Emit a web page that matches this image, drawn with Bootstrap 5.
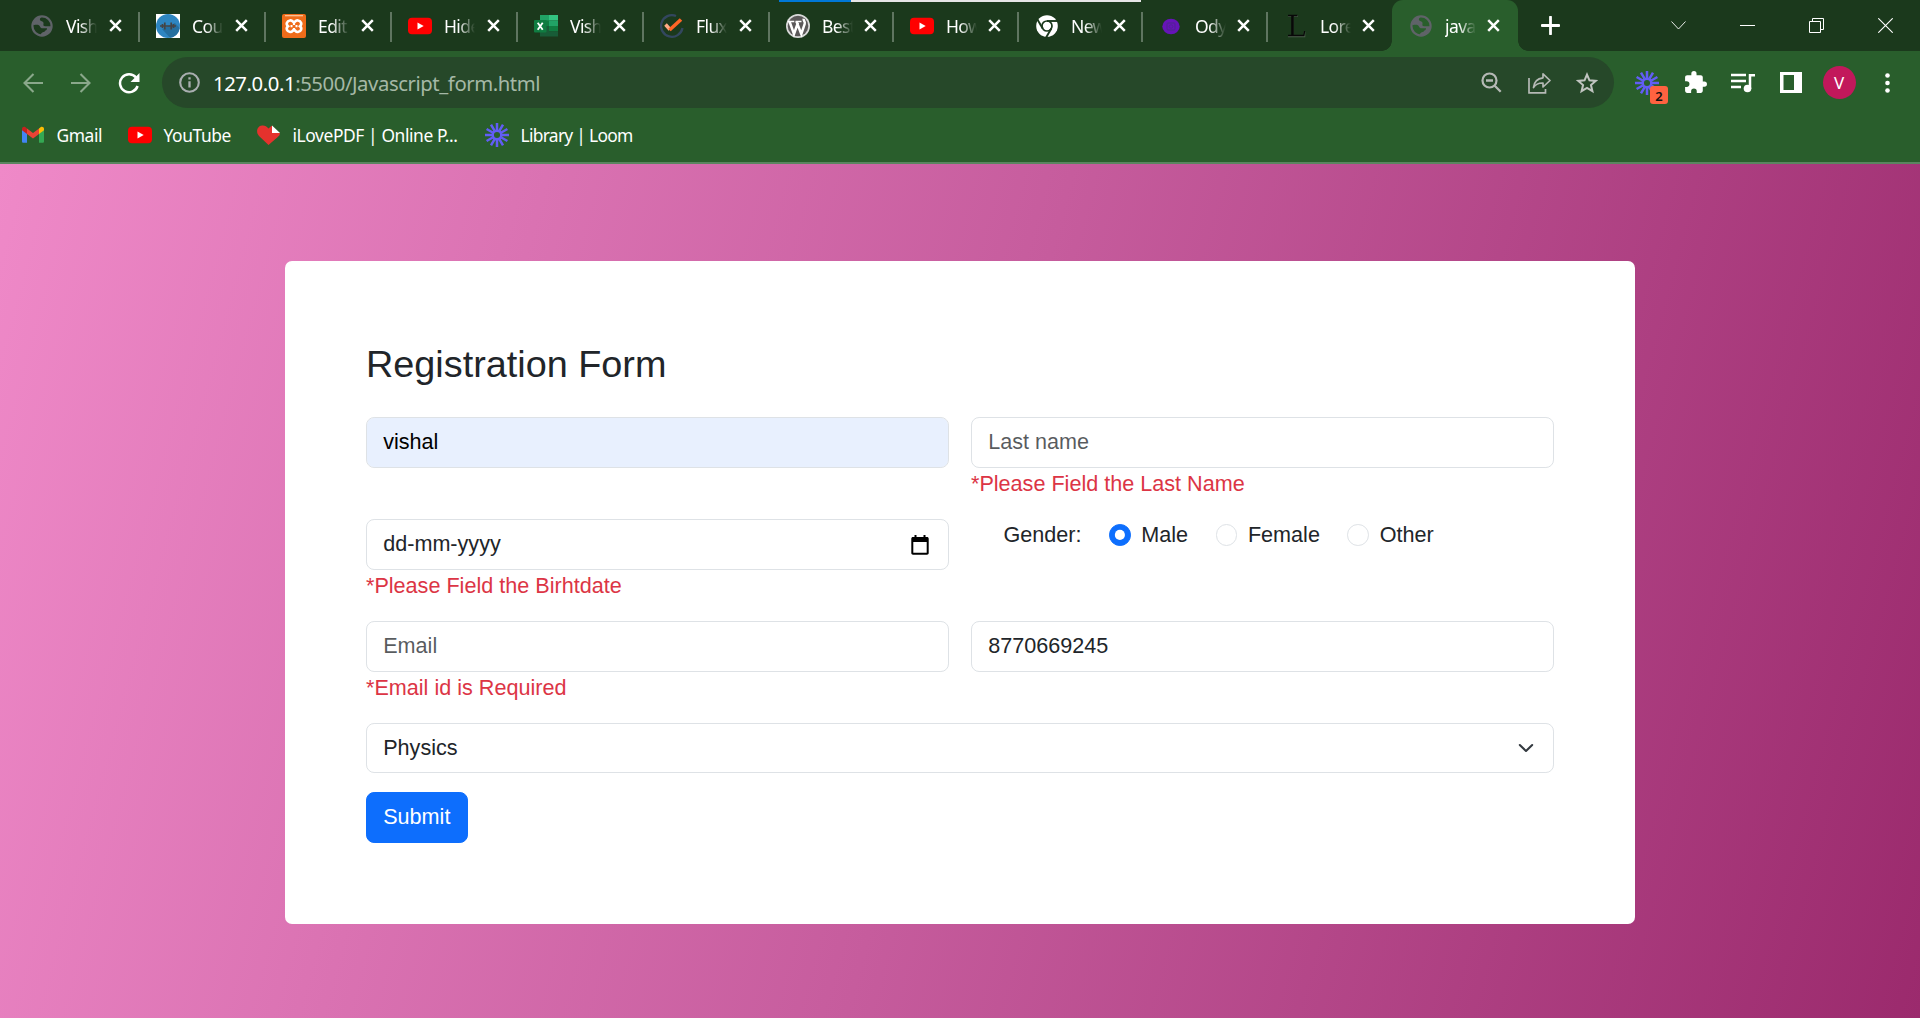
<!DOCTYPE html>
<html lang="en">
<head>
<meta charset="utf-8">
<meta name="viewport" content="width=device-width, initial-scale=1">
<title>javascript form</title>
<link href="https://cdn.jsdelivr.net/npm/bootstrap@5.3.0/dist/css/bootstrap.min.css" rel="stylesheet">
<style>
  html { font-size: 21.6px; }
  body { font-family: "Liberation Sans", Arial, sans-serif; height: 1018px; overflow: hidden; }
  svg { display: block; flex: none; }

  /* browser chrome */
  .chrome-ui { font-family: "Noto Sans", "Open Sans", sans-serif; color: #fff; background: #295e2c; height: 164px; border-bottom: 2px solid #5a8560; }
  .tab-strip { height: 51px; background: #1b391c; padding-left: 13px; position: relative; }
  .strip-progress { position: absolute; top: 0; left: 779px; width: 362px; height: 2px; background: linear-gradient(90deg, #0078d7 72px, #e6e6e6 72px); }
  .tab-item { width: 126px; height: 51px; padding-left: 17px; position: relative; }
  .tab-item.w125 { width: 125px; }
  .tab-item.w124 { width: 124px; }
  .tab-item + .tab-item::before { content: ""; position: absolute; left: -1px; top: 12px; width: 1.5px; height: 30px; background: #5f7560; }
  .tab-item.current { background: #295e2c; border-radius: 11px 11px 0 0; }
  .tab-item.current::before, .tab-item.current::after { content: "" !important; position: absolute !important; top: auto !important; bottom: 0; width: 10px !important; height: 10px !important; }
  .tab-item.current::before { left: -10px !important; background: radial-gradient(circle at 0 0, transparent 9.5px, #295e2c 10px) !important; }
  .tab-item.current::after { right: -10px; background: radial-gradient(circle at 100% 0, transparent 9.5px, #295e2c 10px); }
  .tab-label { width: 31px; margin-left: 12px; font-size: 17.5px; letter-spacing: -.6px; line-height: 24px; overflow: hidden; white-space: nowrap; -webkit-mask-image: linear-gradient(90deg, #000 45%, transparent 100%); mask-image: linear-gradient(90deg, #000 45%, transparent 100%); }
  .tab-close { margin-left: 12px; }
  .w124 .tab-close, .w125 .tab-close, .current .tab-close { margin-left: 11px; }
  .new-tab { margin-left: 23px; }
  .win-controls { margin-left: auto; padding-right: 27px; gap: 54px; height: 43px; }

  .tool-bar { height: 63px; padding: 0 9px; }
  .tool-cell { width: 48px; height: 51px; position: relative; }
  .address { height: 51px; border-radius: 26px; background: #264829; margin: 0 9px; padding: 0 3px 0 17px; }
  .address-text { margin-left: 13px; font-size: 20.3px; letter-spacing: -.42px; line-height: 28px; color: #a5b8a6; white-space: nowrap; }
  .address-text b { color: #fff; font-weight: 400; }
  .ext-count { position: absolute; left: 27px; top: 29px; width: 18px; height: 18px; border-radius: 3px; background: #ff6240; color: #111; font-size: 13px; line-height: 20px; font-weight: 600; text-align: center; }
  .avatar { width: 33px; height: 33px; border-radius: 50%; background: #c2185b; font-size: 17px; line-height: 33px; text-align: center; }

  .bookmarks { height: 42px; font-size: 17.4px; line-height: 24px; padding-left: 21px; letter-spacing: -.4px; }
  .bookmark-item { white-space: nowrap; gap: 11.5px; }
  .bm-gmail { width: 107px; }
  .bm-youtube { width: 128px; }
  .bm-pdf { width: 229px; }
  .bm-loom { letter-spacing: -.7px; }

  /* page */
  .page-area { height: 854px; padding-top: 97px; background: linear-gradient(105deg, #ef89c8 0%, #c65c9d 50%, #9b2a6d 100%); }
  .form-panel { width: 1350px; height: 663px; margin: 0 auto; padding: 80px 81px; background: #fff; border-radius: 7px; }
  .form-title { font-size: 1.75rem; margin-bottom: 30px; line-height: 46px; }
  .field-row { --bs-gutter-x: 22px; height: 102px; }
  .form-panel .form-control { height: 51px; padding-top: 7px; padding-bottom: 9px; }
  .form-panel .date-box { padding-top: 9px; }
  .date-icon { margin-right: 3px; }
  .form-panel .form-select { height: 50px; background-size: 21.6px 16.2px; padding-top: 8px; padding-bottom: 8px; }
  .form-panel .autofilled { background-color: #e8f0fe; color: #000; }
  .error-text { line-height: 32px; color: #dc3545; }
  .gender-line { padding-left: 32.4px; line-height: 32px; }
  .gender-name { margin-right: 27.5px; }
  .gender-line .form-check-inline { margin-right: 27.4px; }
  .form-panel .btn { margin-top: 19px; height: 51px; padding-top: 7px; }
</style>
<script src="https://cdn.jsdelivr.net/npm/bootstrap@5.3.0/dist/js/bootstrap.bundle.min.js"></script>
</head>
<body>
<svg width="0" height="0" class="position-absolute">
  <defs>
    <symbol id="i-close" viewBox="0 0 13 13"><path d="M1.2 1.2l10.6 10.6M11.800 1.200L1.200 11.800" stroke="#fff" stroke-width="2.500" fill="none"/></symbol>
    <symbol id="i-globe" viewBox="0 0 24 24"><circle cx="12" cy="12" r="9.6" fill="none" stroke="#5f6368" stroke-width="2.2"/><path d="M13 2c1 2-1 4-3.500 4.300-.8 1.700-2.500 1.200-2.500 3.500h5.500c1.700.5 1.200 2.600 3 3.200 2.300.6 4.500-.5 6.300.4C20.500 18.500 17 21.500 13 22c-.8-1.500 1.500-2 1-4-.6-1.500-3-.8-3.500-2.800-.3-1.500.8-2.700-.6-3.200-2-.7-4.500.2-7.500-.3C2.500 6 7 2 13 2z" transform="rotate(180 12 12)" fill="#5f6368"/></symbol>
    <symbol id="i-youtube" viewBox="0 0 24 24"><rect x="0" y="3.700" width="24" height="16.600" rx="4" fill="#f00"/><path d="M9.500 8.500v7l6.200-3.500z" fill="#fff"/></symbol>
    <symbol id="i-loom" viewBox="-12 -12 24 24"><g stroke="#625df5" stroke-width="2.500" fill="none"><circle r="4.300"/><path id="lm" d="M0-5V-12M0 5V12M-5 0H-12M5 0H12"/><use href="#lm" transform="rotate(30)"/><use href="#lm" transform="rotate(60)"/></g></symbol>
  </defs>
</svg>

<header class="chrome-ui">
  <div class="tab-strip d-flex align-items-center">
    <div class="strip-progress"></div>
    <div class="tab-item d-flex align-items-center"><svg width="24" height="24"><use href="#i-globe"/></svg><span class="tab-label">Vish</span><svg class="tab-close" width="13" height="13"><use href="#i-close"/></svg></div>
    <div class="tab-item d-flex align-items-center"><svg width="24" height="24" viewBox="0 0 24 24"><path d="M0 0h24v24H0z" fill="#fff"/><circle cx="12" cy="12" r="12" fill="#2e86c1"/><path d="M19 9l4.700 5A12 12 0 0 1 14 23.800L6 15z" fill="#256f9f"/><path d="M4 12h16M6.500 10v4M8.800 8.500v7M17.500 10v4M15.200 8.500v7" stroke="#444" stroke-width="1.700"/></svg><span class="tab-label">Cou</span><svg class="tab-close" width="13" height="13"><use href="#i-close"/></svg></div>
    <div class="tab-item d-flex align-items-center"><svg width="24" height="24" viewBox="0 0 24 24"><rect width="24" height="24" rx="2" fill="#ef6c1a"/><path d="M3 1.700h18" stroke="#fbc9a2" stroke-width="1.200"/><path d="M8 6.500c2-1 3.200 2 4 2s2-3 4-2c3 .5 4.500 3.500 2 5.700 2.500 2 1 5.500-2 5.700-2 .6-3-2-4-2s-2 2.600-4 2c-3-.2-4.500-3.700-2-5.700-2.500-2.200-1-5.200 2-5.700z" fill="none" stroke="#fff" stroke-width="2.600"/><path d="M8.500 12.200h2M13.500 12.200h2M12 8v3M12 14v3" stroke="#fff" stroke-width="2.200"/></svg><span class="tab-label">Edit</span><svg class="tab-close" width="13" height="13"><use href="#i-close"/></svg></div>
    <div class="tab-item d-flex align-items-center"><svg width="24" height="24"><use href="#i-youtube"/></svg><span class="tab-label">Hide</span><svg class="tab-close" width="13" height="13"><use href="#i-close"/></svg></div>
    <div class="tab-item d-flex align-items-center"><svg width="24" height="24" viewBox="0 0 24 24"><path d="M6 1h18v5.500H6z" fill="#33c481"/><path d="M6 1h9v5.500H6zM15 6.500h9V12h-9z" fill="#21a366"/><path d="M6 6.500h9V12H6zM15 12h9v5.500h-9z" fill="#107c41"/><path d="M6 12h9v5.500h9V22.500H6z" fill="#185c37"/><rect y="6" width="12.500" height="12.500" rx="1" fill="#107c41"/><path d="M3.700 8.700l5 7M8.700 8.700l-5 7" stroke="#fff" stroke-width="1.800"/></svg><span class="tab-label">Vish</span><svg class="tab-close" width="13" height="13"><use href="#i-close"/></svg></div>
    <div class="tab-item d-flex align-items-center"><svg width="24" height="24" viewBox="0 0 24 24"><path d="M16 2A10.800 10.800 0 1 0 22.500 14" fill="none" stroke="#33475f" stroke-width="2.300"/><path d="M5.500 10.500l4.500 5" stroke="#ffab85" stroke-width="3.500"/><path d="M9.500 16L21 5.500" stroke="#ff6526" stroke-width="3.600"/></svg><span class="tab-label">Flux</span><svg class="tab-close" width="13" height="13"><use href="#i-close"/></svg></div>
    <div class="tab-item w124 d-flex align-items-center"><svg width="24" height="24" viewBox="0 0 24 24"><circle cx="12" cy="12" r="12" fill="#d9d9d9"/><circle cx="12" cy="12" r="10.300" fill="#5b5859"/><path d="M1.800 7.500h6.500M9.500 7.500h6" stroke="#fff" stroke-width="1.300"/><path d="M3.500 7.500L8 20l4-11.500M10.500 7.500L15.300 20l3.400-10.200c.7-2.200-1.500-2.800-1-5" fill="none" stroke="#fff" stroke-width="2.500"/></svg><span class="tab-label">Best</span><svg class="tab-close" width="13" height="13"><use href="#i-close"/></svg></div>
    <div class="tab-item w125 d-flex align-items-center"><svg width="24" height="24"><use href="#i-youtube"/></svg><span class="tab-label">How</span><svg class="tab-close" width="13" height="13"><use href="#i-close"/></svg></div>
    <div class="tab-item w124 d-flex align-items-center"><svg width="24" height="24" viewBox="-12 -12 24 24"><circle r="10.800" fill="#fff"/><circle r="5" fill="none" stroke="#1b391c" stroke-width="1.700"/><g stroke="#1b391c" stroke-width="1.900"><path id="ch" d="M0-5H11"/><use href="#ch" transform="rotate(120)"/><use href="#ch" transform="rotate(240)"/></g></svg><span class="tab-label">New</span><svg class="tab-close" width="13" height="13"><use href="#i-close"/></svg></div>
    <div class="tab-item w125 d-flex align-items-center"><svg width="24" height="24" viewBox="0 0 24 24"><ellipse cx="12" cy="12.500" rx="8.700" ry="7.700" fill="#6614b8"/><rect x="8" y="9" width="8" height="7" rx="1.500" fill="none" stroke="#55209a" stroke-width="1.300"/><circle cx="12" cy="12.500" r="1.800" fill="none" stroke="#55209a"/></svg><span class="tab-label">Ody</span><svg class="tab-close" width="13" height="13"><use href="#i-close"/></svg></div>
    <div class="tab-item w125 d-flex align-items-center"><svg width="24" height="24" viewBox="0 0 24 24"><path d="M4 2h10M4 22.500h16.500v-5M9 2v20" fill="none" stroke="#4c5f4c" stroke-width="1.600"/><path d="M4 1.500h9.500M4 21.500h15.800l.8-4.500" fill="none" stroke="#080808" stroke-width="1.400"/><path d="M8.500 2v19" stroke="#080808" stroke-width="2.600"/></svg><span class="tab-label">Lore</span><svg class="tab-close" width="13" height="13"><use href="#i-close"/></svg></div>
    <div class="tab-item current d-flex align-items-center"><svg width="24" height="24"><use href="#i-globe"/></svg><span class="tab-label">java</span><svg class="tab-close" width="13" height="13"><use href="#i-close"/></svg></div>
    <svg class="new-tab" width="19" height="19" viewBox="0 0 19 19"><path d="M9.500 1v17M1 9.500h17" stroke="#fff" stroke-width="2.800" stroke-linecap="round"/></svg>
    <div class="win-controls d-flex align-items-center">
      <svg width="15" height="15" viewBox="0 0 15 15"><path d="M.5 3.500l7 7.500 7-7.500" fill="none" stroke="#fff" stroke-width=".9"/></svg>
      <svg width="15" height="15" viewBox="0 0 15 15"><path d="M0 7.500h15" stroke="#fff"/></svg>
      <svg width="15" height="15" viewBox="0 0 15 15"><path d="M.5 3.500h11v11H.5zM3.500 3.500v-3h11v11h-3" fill="none" stroke="#fff"/></svg>
      <svg width="15" height="15" viewBox="0 0 15 15"><path d="M.3.300l14.400 14.400M14.700.300L.300 14.700" stroke="#fff" stroke-width="1.100"/></svg>
    </div>
  </div>

  <div class="tool-bar d-flex align-items-center">
    <div class="tool-cell d-flex align-items-center justify-content-center"><svg width="20" height="20" viewBox="0 0 20 20"><path d="M20 10H2M10.500 1L1.500 10l9 9" fill="none" stroke="#8aa88b" stroke-width="2.100"/></svg></div>
    <div class="tool-cell d-flex align-items-center justify-content-center"><svg width="20" height="20" viewBox="0 0 20 20"><path d="M0 10h18M9.500 1l9 9-9 9" fill="none" stroke="#8aa88b" stroke-width="2.100"/></svg></div>
    <div class="tool-cell d-flex align-items-center justify-content-center"><svg width="22" height="22" viewBox="0 0 22 22"><path d="M18 5.500A9 9 0 1 0 19.600 14" fill="none" stroke="#fff" stroke-width="2.500"/><path d="M21.500 1v9h-9z" fill="#fff"/></svg></div>
    <div class="address flex-grow-1 d-flex align-items-center">
      <svg width="21" height="21" viewBox="0 0 21 21"><circle cx="10.500" cy="10.500" r="9.300" fill="none" stroke="#a9aeb0" stroke-width="2.100"/><path d="M10.500 9.300v6.200M10.500 5.300v2.300" stroke="#a9aeb0" stroke-width="2.300"/></svg>
      <span class="address-text"><b>127.0.0.1</b>:5500/Javascript_form.html</span>
      <div class="tool-cell d-flex align-items-center justify-content-center ms-auto"><svg width="21" height="21" viewBox="0 0 21 21"><circle cx="8.500" cy="8.500" r="7" fill="none" stroke="#b5b9b5" stroke-width="2.200"/><path d="M5 8.500h7M13.700 13.700l6 6" stroke="#b5b9b5" stroke-width="2.300"/></svg></div>
      <div class="tool-cell d-flex align-items-center justify-content-center"><svg width="23" height="22" viewBox="0 0 23 22"><path d="M1 6v14.800h16.500V17" fill="none" stroke="#b5b9b5" stroke-width="1.700"/><path d="M15 1.800l7 6.700-7 6.500v-4c-4-.2-7 .8-9.500 4.500.5-5.500 4-9 9.500-9.700z" fill="none" stroke="#b5b9b5" stroke-width="1.700" stroke-linejoin="round"/></svg></div>
      <div class="tool-cell d-flex align-items-center justify-content-center"><svg width="22" height="22" viewBox="0 0 24 24"><path d="M12 2.800l2.700 6.300 6.800.6-5.200 4.500 1.600 6.700-5.900-3.600-5.900 3.600 1.600-6.700-5.200-4.500 6.800-.6z" fill="none" stroke="#c0c4c0" stroke-width="2.200"/></svg></div>
    </div>
    <div class="tool-cell d-flex align-items-center justify-content-center"><svg width="24" height="24"><use href="#i-loom"/></svg><span class="ext-count">2</span></div>
    <div class="tool-cell d-flex align-items-center justify-content-center"><svg width="25" height="25" viewBox="0 0 24 24"><path d="M20.500 11H19V7c0-1.100-.9-2-2-2h-4V3.500a2.500 2.500 0 0 0-5 0V5H4c-1.100 0-2 .9-2 2v3.800h1.500a2.700 2.700 0 0 1 0 5.400H2V20c0 1.100.9 2 2 2h3.800v-1.500a2.700 2.700 0 0 1 5.400 0V22H17c1.100 0 2-.9 2-2v-4h1.500a2.500 2.500 0 0 0 0-5z" fill="#fff"/></svg></div>
    <div class="tool-cell d-flex align-items-center justify-content-center"><svg width="24" height="20" viewBox="0 0 24 20"><path d="M0 2h15M0 8h15M0 14h10" stroke="#fff" stroke-width="2.300"/><path d="M19 16V2.200h5" fill="none" stroke="#fff" stroke-width="2.500"/><circle cx="16.500" cy="15.500" r="3.800" fill="#fff"/></svg></div>
    <div class="tool-cell d-flex align-items-center justify-content-center"><svg width="22" height="21" viewBox="0 0 22 21"><path fill-rule="evenodd" d="M0 0h22v21H0zM3.500 3v15H14V3z" fill="#fff"/></svg></div>
    <div class="tool-cell d-flex align-items-center justify-content-center"><div class="avatar">V</div></div>
    <div class="tool-cell d-flex align-items-center justify-content-center"><svg width="5" height="20" viewBox="0 0 5 20"><g fill="#fff"><circle cx="2.500" cy="2.500" r="2.300"/><circle cx="2.500" cy="10" r="2.300"/><circle cx="2.500" cy="17.500" r="2.300"/></g></svg></div>
  </div>

  <nav class="bookmarks d-flex">
    <div class="bookmark-item bm-gmail d-flex align-items-center"><svg width="24" height="24" viewBox="0 0 24 24"><path d="M1 6v12.500c0 .8.600 1.300 1.300 1.300H6V10z" fill="#4285f4"/><path d="M23 6v12.500c0 .8-.6 1.300-1.300 1.300H18V10z" fill="#34a853"/><path d="M18 5.500V11l5-3.800V6c0-2-2-2.700-3.500-1.700z" fill="#fbbc04"/><path d="M6 5.500V11L1 7.200V6c0-2 2-2.700 3.500-1.700z" fill="#c5221f"/><path d="M6 5.400l6 4.600 6-4.600V11l-6 4.600L6 11z" fill="#ea4335"/></svg><span>Gmail</span></div>
    <div class="bookmark-item bm-youtube d-flex align-items-center"><svg width="24" height="24"><use href="#i-youtube"/></svg><span>YouTube</span></div>
    <div class="bookmark-item bm-pdf d-flex align-items-center"><svg width="25" height="24" viewBox="0 0 25 24"><path d="M12.500 22L3 13C-.5 9.500 1 3 6 2.600c3-.3 4.500 1 6.500 3L16 2.500V10h8c0 2-1 3-2.500 4.300z" fill="#e5322d"/><path d="M16 2.500L24 10h-8z" fill="#fff"/></svg><span>iLovePDF | Online P...</span></div>
    <div class="bookmark-item bm-loom d-flex align-items-center"><svg width="24" height="24"><use href="#i-loom"/></svg><span>Library | Loom</span></div>
  </nav>
</header>

<main class="page-area">
  <form class="form-panel">
    <h3 class="form-title">Registration Form</h3>
    <div class="row field-row">
      <div class="col-6"><input type="text" class="form-control autofilled" value="vishal"></div>
      <div class="col-6"><input type="text" class="form-control" placeholder="Last name"><div class="error-text">*Please Field the Last Name</div></div>
    </div>
    <div class="row field-row">
      <div class="col-6">
        <div class="form-control date-box d-flex justify-content-between align-items-center"><span>dd-mm-yyyy</span><svg class="date-icon" width="18" height="20" viewBox="0 0 18 20"><path fill-rule="evenodd" d="M2 2h1.500V0h2v2h7V0h2v2H16c1 0 1.700.7 1.700 1.700V18c0 1-.7 1.700-1.700 1.700H2C1 19.700.3 19 .3 18V3.700C.3 2.700 1 2 2 2zm.3 5v10.700h13.400V7z"/></svg></div>
        <div class="error-text">*Please Field the Birhtdate</div>
      </div>
      <div class="col-6">
        <div class="gender-line d-flex">
          <span class="gender-name">Gender:</span>
          <div class="form-check form-check-inline"><input class="form-check-input" type="radio" name="gender" id="g1" checked><label class="form-check-label" for="g1">Male</label></div>
          <div class="form-check form-check-inline"><input class="form-check-input" type="radio" name="gender" id="g2"><label class="form-check-label" for="g2">Female</label></div>
          <div class="form-check form-check-inline"><input class="form-check-input" type="radio" name="gender" id="g3"><label class="form-check-label" for="g3">Other</label></div>
        </div>
      </div>
    </div>
    <div class="row field-row">
      <div class="col-6"><input type="email" class="form-control" placeholder="Email"><div class="error-text">*Email id is Required</div></div>
      <div class="col-6"><input type="text" class="form-control" value="8770669245"></div>
    </div>
    <select class="form-select"><option selected>Physics</option></select>
    <button type="button" class="btn btn-primary">Submit</button>
  </form>
</main>
</body>
</html>
